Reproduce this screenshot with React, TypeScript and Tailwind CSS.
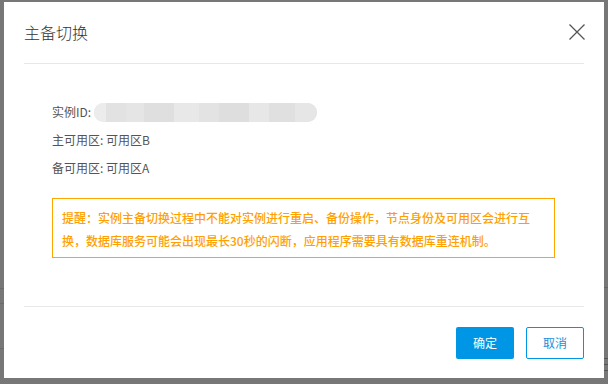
import React from "react";

export default function App() {
  const font = { fontFamily: '"Noto Sans CJK SC", "Noto Sans", sans-serif' };
  return (
    <div className="relative w-[608px] h-[384px] bg-[#777777] overflow-hidden" style={font}>
      {/* background page lines peeking out */}
      <div className="absolute left-0 top-[288px] w-[4px] h-px bg-[#6a6a6a]" />
      <div className="absolute left-0 top-[303px] w-[4px] h-px bg-[#6a6a6a]" />
      <div className="absolute left-0 top-[348px] w-[4px] h-px bg-[#6a6a6a]" />
      <div className="absolute right-0 top-[287px] w-[4px] h-px bg-[#666666]" />
      <div className="absolute right-0 top-[358px] w-[4px] h-px bg-[#555555]" />
      <div className="absolute right-0 top-[364px] w-[4px] h-px bg-[#555555]" />
      <div className="absolute right-0 top-[370px] w-[4px] h-px bg-[#555555]" />

      <div className="relative pl-[4px] pt-[2px]">
        <div className="w-[600px] h-[376px] bg-white px-[20px] flex flex-col">
          {/* header */}
          <div className="flex items-center justify-between pt-[18px] pb-[19px] border-b border-[#e8e8e8]">
            <div className="text-[16px] leading-[24px] font-light text-[#333333]">主备切换</div>
            <svg width="18" height="18" viewBox="0 0 18 18" className="mr-[-2px]">
              <path d="M1.5 1.5 L16.5 16.5 M16.5 1.5 L1.5 16.5" stroke="#555555" strokeWidth="1.3" fill="none" />
            </svg>
          </div>

          {/* body */}
          <div className="pl-[28px] pt-[34px] text-[12px] text-[#555555]">
            <div className="flex items-center h-[28px] leading-[28px]">
              <span>实例ID:</span>
              <div className="ml-[3px] w-[223px] h-[19px] rounded-full bg-[#e6e6e6] flex overflow-hidden">
                <div className="w-[12px] bg-[#ececec]" />
                <div className="w-[20px] bg-[#e2e2e2]" />
                <div className="w-[18px] bg-[#e5e5e5]" />
                <div className="w-[30px] bg-[#dfdfdf]" />
                <div className="w-[25px] bg-[#e8e8e8]" />
                <div className="w-[20px] bg-[#e3e3e3]" />
                <div className="w-[30px] bg-[#dedede]" />
                <div className="w-[20px] bg-[#e7e7e7]" />
                <div className="w-[26px] bg-[#e0e0e0]" />
                <div className="flex-1 bg-[#e6e6e6]" />
              </div>
            </div>
            <div className="h-[28px] leading-[28px]">主可用区: 可用区B</div>
            <div className="h-[28px] leading-[28px]">备可用区: 可用区A</div>

            <div className="mt-[16px] w-[503px] border border-[#ffa500] pl-[9px] pr-[6px] pt-[7px] pb-[5px] text-[12px] leading-[23px] font-medium text-[#ffa000]">
              提醒：实例主备切换过程中不能对实例进行重启、备份操作，节点身份及可用区会进行互
              <br />
              换，数据库服务可能会出现最长30秒的闪断，应用程序需要具有数据库重连机制。
            </div>
          </div>

          <div className="mt-auto border-t border-[#e8e8e8] pt-[20px] pb-[19px] flex justify-end gap-[12px]">
            <button className="w-[58px] h-[32px] rounded-[2px] bg-[#0096e6] text-white text-[12px]">确定</button>
            <button className="w-[58px] h-[32px] rounded-[2px] border border-[#0096e6] bg-white text-[#1a8fd9] text-[12px]">取消</button>
          </div>
        </div>
      </div>
    </div>
  );
}
